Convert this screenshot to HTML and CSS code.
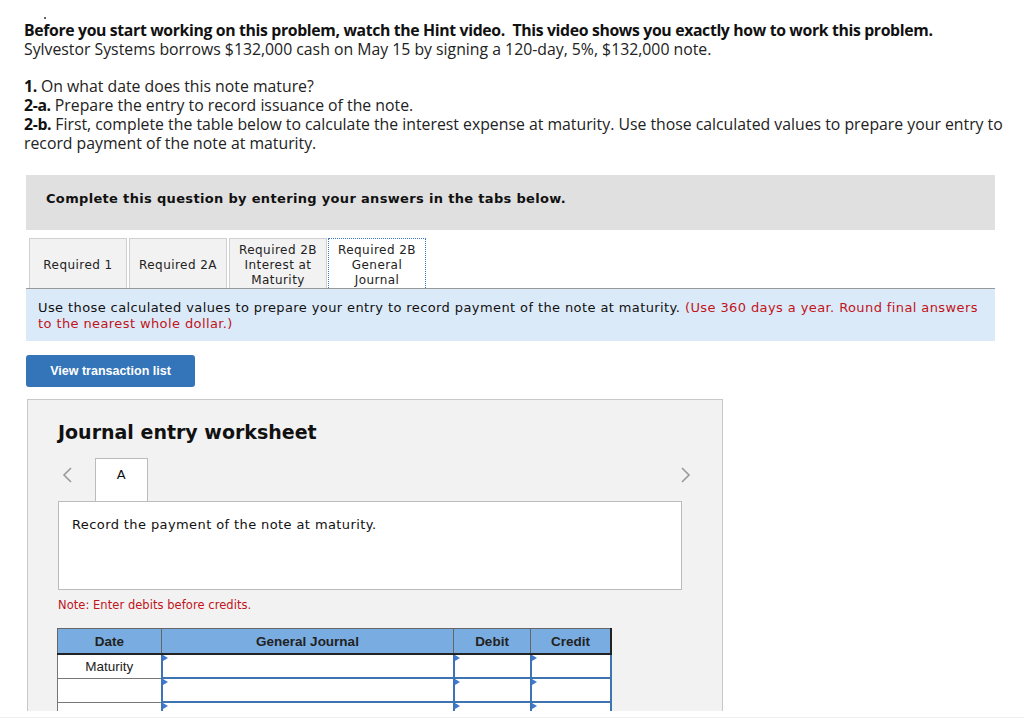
FILE: index.html
```html
<!DOCTYPE html>
<html>
<head>
<meta charset="utf-8">
<link rel="stylesheet" href="styles.css">
</head>
<body>
<div class="page">
  <div class="dot"></div>
  <div class="intro">
    <p class="line"><b>Before you start working on this problem, watch the Hint video.&nbsp; This video shows you exactly how to work this problem.</b></p>
    <p class="line">Sylvestor Systems borrows $132,000 cash on May 15 by signing a 120-day, 5%, $132,000 note.</p>
    <p class="line gap"><b>1.</b> On what date does this note mature?</p>
    <p class="line"><b>2-a.</b> Prepare the entry to record issuance of the note.</p>
    <p class="line"><b>2-b.</b> First, complete the table below to calculate the interest expense at maturity. Use those calculated values to prepare your entry to record payment of the note at maturity.</p>
  </div>

  <div class="question">
    <div class="banner">Complete this question by entering your answers in the tabs below.</div>
    <div class="tabs">
      <div class="tab">Required 1</div>
      <div class="tab">Required 2A</div>
      <div class="tab">Required 2B<br>Interest at<br>Maturity</div>
      <div class="tab active">Required 2B<br>General<br>Journal</div>
    </div>
    <div class="instr">Use those calculated values to prepare your entry to record payment of the note at maturity. <span class="red">(Use 360 days a year. Round final answers to the nearest whole dollar.)</span></div>
    <button class="btn">View transaction list</button>

    <div class="worksheet">
      <h2 class="ws-title">Journal entry worksheet</h2>
      <div class="ws-nav">
        <span class="arrow">
          <svg width="12" height="18" viewBox="0 0 12 18"><path d="M10 2 L3 9 L10 16" fill="none" stroke="#999" stroke-width="1.6"/></svg>
        </span>
        <div class="ws-tab">A</div>
        <span class="spacer"></span>
        <span class="arrow right">
          <svg width="12" height="18" viewBox="0 0 12 18"><path d="M2 2 L9 9 L2 16" fill="none" stroke="#999" stroke-width="1.6"/></svg>
        </span>
      </div>
      <div class="ws-box">Record the payment of the note at maturity.</div>
      <div class="note">Note: Enter debits before credits.</div>
      <table class="jt">
        <thead>
          <tr><th class="c-date">Date</th><th class="c-gj">General Journal</th><th class="c-dr">Debit</th><th class="c-cr">Credit</th></tr>
        </thead>
        <tbody>
          <tr><td class="date">Maturity</td><td class="inp"><i></i></td><td class="inp"><i></i></td><td class="inp"><i></i></td></tr>
          <tr><td class="date"></td><td class="inp"><i></i></td><td class="inp"><i></i></td><td class="inp"><i></i></td></tr>
          <tr><td class="date"></td><td class="inp"><i></i></td><td class="inp"><i></i></td><td class="inp"><i></i></td></tr>
        </tbody>
      </table>
    </div>
  </div>
</div>
<div class="edge"></div>
</body>
</html>
```

FILE: styles.css
```css
html, body {
  margin: 0;
  padding: 0;
  background: #fff;
}
.page {
  height: 711px;
  overflow: hidden;
  position: relative;
}
.dot {
  position: absolute;
  left: 44px;
  top: 17px;
  width: 2px;
  height: 2px;
  background: #333;
  border-radius: 1px;
}
.intro {
  padding: 21px 16px 0 24px;
  font-family: "Open Sans", "Liberation Sans", sans-serif;
  font-size: 15.8px;
  color: #222;
}
.intro .line {
  margin: 0;
  line-height: 19px;
}
.intro .gap {
  margin-top: 18px;
}
.intro b {
  font-weight: 700;
  color: #111;
  letter-spacing: -0.35px;
}
.question {
  margin: 22px 29px 0 26px;
  font-family: Verdana, "DejaVu Sans", "Open Sans", sans-serif;
  color: #111;
  letter-spacing: 0.4px;
}
.banner {
  background: #e0e0e0;
  height: 55px;
  padding: 0 0 0 20px;
  font-weight: bold;
  font-size: 13px;
  line-height: 47px;
  letter-spacing: 0.33px;
}
.tabs {
  display: flex;
  margin-top: 8px;
  padding-left: 3px;
  gap: 2px;
  border-bottom: 1px solid #9a9a9a;
  height: 50px;
  align-items: stretch;
}
.tab {
  width: 96px;
  background: #f2f2f2;
  border: 1px solid #d0d0d0;
  border-bottom: none;
  font-size: 12px;
  line-height: 15px;
  letter-spacing: 0.45px;
  text-align: center;
  display: flex;
  align-items: center;
  justify-content: center;
  padding-top: 3px;
  color: #222;
}
.tab.active {
  background: #fff;
  border: 1px dotted #3a7cc4;
  border-bottom: none;
  width: 96px;
  margin-left: -1px;
}
.instr {
  background: #dbeaf8;
  padding: 11px 12px 9px 12px;
  font-size: 13px;
  line-height: 16px;
  color: #111;
  height: 32px;
}
.red {
  color: #c0141b;
}
.btn {
  display: block;
  margin-top: 14px;
  width: 169px;
  height: 32px;
  background: #3474b9;
  color: #fff;
  border: none;
  border-radius: 3px;
  font-family: "Liberation Sans", Arial, sans-serif;
  font-weight: bold;
  font-size: 12.5px;
  letter-spacing: 0;
  padding: 0;
}
.worksheet {
  margin-top: 12px;
  margin-left: 1px;
  width: 664px;
  height: 330px;
  background: #f2f2f2;
  border: 1px solid #c8c8c8;
  padding: 0 0 0 30px;
}
.ws-title {
  margin: 19px 0 0 0;
  font-size: 19px;
  font-weight: bold;
  line-height: 26px;
  letter-spacing: 0;
  color: #111;
}
.ws-nav {
  display: flex;
  align-items: flex-start;
  margin-top: 13px;
  height: 43px;
  width: 634px;
}
.arrow {
  display: block;
  margin-top: 8px;
  width: 37px;
  padding-left: 3px;
  box-sizing: border-box;
}
.arrow.right {
  width: 12px;
  padding: 0;
}
.spacer {
  flex: 1;
}
.ws-tab {
  width: 53px;
  height: 43px;
  background: #fff;
  border: 1px solid #bbb;
  border-bottom: none;
  box-sizing: border-box;
  text-align: center;
  font-size: 13px;
  line-height: 32px;
  position: relative;
  z-index: 1;
  margin-bottom: -1px;
}
.ws-box {
  height: 89px;
  background: #fff;
  border: 1px solid #bbb;
  font-size: 13px;
  padding: 0 0 0 13px;
  box-sizing: border-box;
  width: 624px;
  line-height: 46px;
}
.note {
  color: #c0141b;
  font-size: 11.5px;
  letter-spacing: 0.05px;
  margin-top: 8px;
  line-height: 15px;
}
.jt {
  margin-top: 15px;
  margin-left: -1px;
  border-collapse: collapse;
  font-family: "Liberation Sans", Arial, sans-serif;
  font-size: 13px;
  letter-spacing: 0;
  table-layout: fixed;
  width: 553px;
}
.jt th {
  background: #79ade2;
  font-weight: bold;
  color: #222;
  height: 24px;
  border: 1px solid #666;
  border-bottom: 2px solid #222;
  padding: 0;
  font-size: 13.5px;
}
.jt th.c-cr {
  border-right: 2px solid #222;
}
.c-date { width: 103px; }
.c-gj { width: 291px; }
.c-dr { width: 76px; }
.c-cr { width: 79px; }
.jt td {
  height: 22px;
  padding: 0;
  background: #fff;
  border: 1px solid #777;
}
.jt td.date {
  text-align: center;
  color: #222;
  font-size: 13.5px;
}
.jt td.inp {
  border: 2px solid #3f74b4;
  position: relative;
}
.jt td.inp i {
  position: absolute;
  left: 0;
  top: 0;
  width: 0;
  height: 0;
  border-top: 3px solid transparent;
  border-bottom: 3px solid transparent;
  border-left: 5px solid #3f7ad0;
}
.edge {
  margin-top: 6px;
  height: 1px;
  background: #eee;
}
```
